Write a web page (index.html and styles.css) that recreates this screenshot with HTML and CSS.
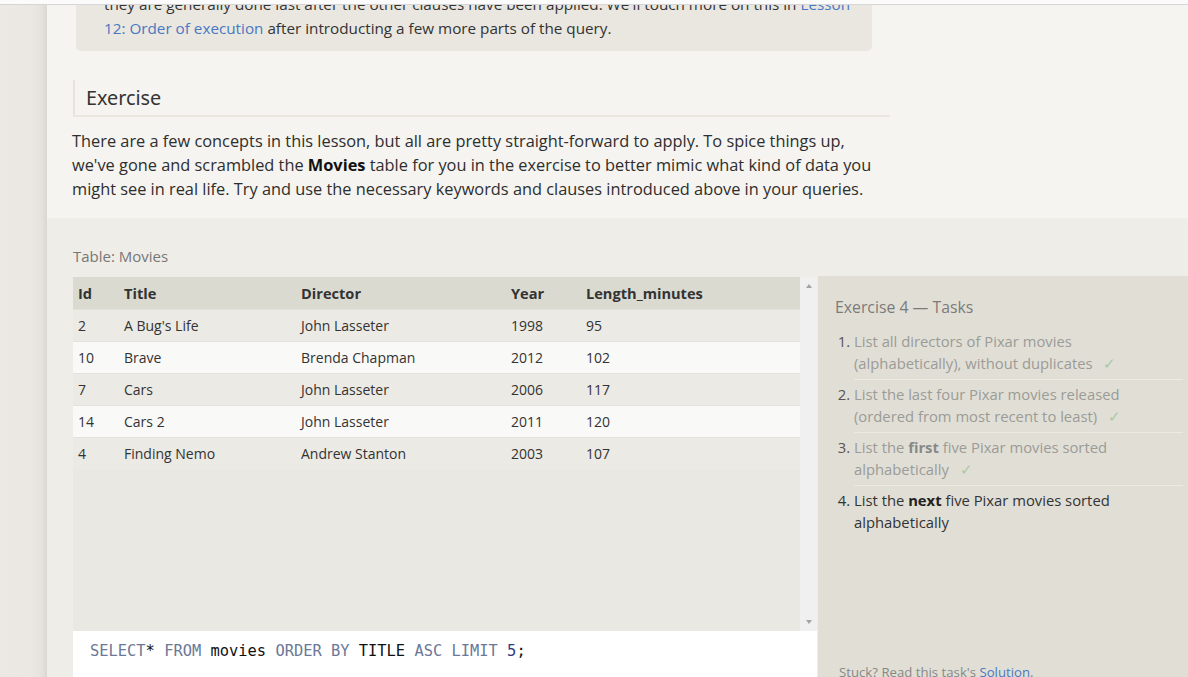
FILE: index.html
```html
<!DOCTYPE html>
<html lang="en">
<head>
<meta charset="utf-8">
<title>SQL Lesson – Exercise</title>
<link rel="stylesheet" href="styles.css">
</head>
<body>
<div class="topbar"></div>
<div class="page">
  <aside class="gutter"></aside>
  <main class="main">
    <section class="lesson">
      <div class="note">they are generally done last after the other clauses have been applied. We'll touch more on this in <a href="#">Lesson<br>12: Order of execution</a> after introducting a few more parts of the query.</div>
      <h2 class="ex-head">Exercise</h2>
      <p class="prose">There are a few concepts in this lesson, but all are pretty straight-forward to apply. To spice things up,<br>we've gone and scrambled the <strong>Movies</strong> table for you in the exercise to better mimic what kind of data you<br>might see in real life. Try and use the necessary keywords and clauses introduced above in your queries.</p>
    </section>
    <section class="exercise">
      <div class="table-label">Table: Movies</div>
      <div class="workspace">
        <div class="left">
          <div class="table-wrap">
            <div class="table-scroll">
              <table class="movies">
                <colgroup>
                  <col class="c-id"><col class="c-title"><col class="c-dir"><col class="c-year"><col class="c-len">
                </colgroup>
                <thead>
                  <tr><th>Id</th><th>Title</th><th>Director</th><th>Year</th><th>Length_minutes</th></tr>
                </thead>
                <tbody>
                  <tr><td>2</td><td>A Bug's Life</td><td>John Lasseter</td><td>1998</td><td>95</td></tr>
                  <tr><td>10</td><td>Brave</td><td>Brenda Chapman</td><td>2012</td><td>102</td></tr>
                  <tr><td>7</td><td>Cars</td><td>John Lasseter</td><td>2006</td><td>117</td></tr>
                  <tr><td>14</td><td>Cars 2</td><td>John Lasseter</td><td>2011</td><td>120</td></tr>
                  <tr><td>4</td><td>Finding Nemo</td><td>Andrew Stanton</td><td>2003</td><td>107</td></tr>
                </tbody>
              </table>
            </div>
            <div class="scrollbar">
              <span class="arrow up"></span>
              <span class="arrow down"></span>
            </div>
          </div>
          <div class="editor"><span class="kw">SELECT</span>* <span class="kw">FROM</span> movies <span class="kw">ORDER BY</span> TITLE <span class="kw">ASC</span> <span class="kw">LIMIT</span> <span class="num">5</span>;</div>
        </div>
        <div class="tasks">
          <h3 class="tasks-title">Exercise 4 — Tasks</h3>
          <ol class="task-list">
            <li class="done">List all directors of Pixar movies<br>(alphabetically), without duplicates <span class="check">✓</span></li>
            <li class="done">List the last four Pixar movies released<br>(ordered from most recent to least) <span class="check">✓</span></li>
            <li class="done">List the <strong>first</strong> five Pixar movies sorted<br>alphabetically <span class="check">✓</span></li>
            <li class="current">List the <strong>next</strong> five Pixar movies sorted<br>alphabetically</li>
          </ol>
          <p class="stuck">Stuck? Read this task's <a href="#">Solution</a>.</p>
        </div>
      </div>
    </section>
  </main>
</div>
</body>
</html>
```

FILE: styles.css
```css
* { box-sizing: border-box; }

html, body {
  margin: 0;
  padding: 0;
  height: 677px;
  overflow: hidden;
}

body {
  background: #ece9e5;
  font-family: "Open Sans", "Noto Sans", sans-serif;
  color: #333;
  position: relative;
}

a { color: #4a78c2; text-decoration: none; }

.topbar {
  position: absolute;
  left: 0;
  top: 0;
  width: 100%;
  height: 5px;
  background: #fbfbfb;
  border-bottom: 1px solid #d6d6d6;
  z-index: 5;
}

.page {
  display: flex;
  min-height: 100%;
}

.gutter {
  width: 47px;
  flex: none;
  background: linear-gradient(to right, #ece9e5 0, #ebe8e4 30px, #e4e0db 47px);
}

.main {
  flex: 1;
  background: #f5f4f0;
  box-shadow: -2px 0 6px rgba(0,0,0,0.06);
}

/* Lesson text */
.lesson {
  padding: 0 0 17px 25px;
}

.note {
  margin: -20px 0 0 4px;
  width: 796px;
  padding: 12px 10px 11px 28px;
  background: #e9e7e0;
  border-radius: 0 0 5px 5px;
  font-size: 15.25px;
  line-height: 24px;
  color: #333;
}

.ex-head {
  margin: 29px 0 0 1px;
  width: 817px;
  padding: 6px 0 6px 11px;
  border-left: 2px solid #e6e4dd;
  border-bottom: 2px solid #e8e6df;
  font-family: "Noto Sans", "Open Sans", sans-serif;
  font-weight: normal;
  font-size: 19.8px;
  line-height: 23px;
  color: #333;
}

.prose {
  margin: 12px 0 0 0;
  font-size: 16.35px;
  line-height: 24px;
  color: #2e2e2e;
  white-space: nowrap;
}

.prose strong { color: #111; }

/* Exercise area */
.exercise {
  background: #efede7;
  padding: 28px 0 0 26px;
}

.table-label {
  font-size: 15px;
  line-height: 20px;
  color: #777;
  margin-bottom: 10px;
}

.workspace {
  display: flex;
  gap: 1px;
}

.left {
  width: 744px;
  flex: none;
  padding-top: 1px;
}

.table-wrap {
  display: flex;
  height: 354px;
}

.table-scroll {
  flex: 1;
  background: #e9e8e2;
}

.movies {
  width: 100%;
  border-collapse: collapse;
  table-layout: fixed;
  font-size: 14px;
  color: #333;
}

.c-id { width: 46px; }
.c-title { width: 177px; }
.c-dir { width: 210px; }
.c-year { width: 75px; }

.movies th,
.movies td {
  height: 32px;
  padding: 0 5px;
  text-align: left;
  white-space: nowrap;
}

.movies th {
  background: #dbdad0;
  font-weight: bold;
  font-size: 14.6px;
  color: #333;
}

.movies tbody tr:nth-child(odd) { background: #ebeae4; }
.movies tbody tr:nth-child(even) { background: #f9f9f8; }
.movies tbody tr { border-top: 1px solid #e3e2dc; }

.scrollbar {
  width: 17px;
  flex: none;
  background: #f0f0f0;
  display: flex;
  flex-direction: column;
  justify-content: space-between;
  align-items: center;
  padding: 7px 0 7px;
}

.arrow {
  width: 0;
  height: 0;
  border-left: 3.5px solid transparent;
  border-right: 3.5px solid transparent;
}

.arrow.up { border-bottom: 4px solid #a3a3a3; }
.arrow.down { border-top: 4px solid #a3a3a3; }

.editor {
  background: #ffffff;
  height: 80px;
  padding: 11px 17px;
  font-family: "DejaVu Sans Mono", "Liberation Mono", monospace;
  font-size: 15.4px;
  line-height: 18px;
  color: #111;
  white-space: pre;
}

.editor .kw { color: #6b7896; }
.editor .num { color: #2e3a80; }

/* Tasks panel */
.tasks {
  flex: 1;
  background: #e1dfd5;
  display: flex;
  flex-direction: column;
  padding: 20px 5px 30px 17px;
}

.tasks-title {
  margin: 0;
  font-weight: normal;
  font-size: 15.8px;
  line-height: 22px;
  color: #7b7b7b;
}

.task-list {
  margin: 12px 0 0 0;
  padding: 0 0 0 19px;
  font-size: 14.8px;
  line-height: 22px;
}

.task-list li {
  padding: 3px 0 5px 0;
  border-bottom: 1px solid #eceae3;
}

.task-list li:first-child { padding-top: 0; }
.task-list li:last-child { border-bottom: none; }

.task-list li.done { color: #9b9b98; }
.task-list li.done::marker { color: #555; }
.task-list li.done strong { color: #888; }

.task-list li.current { color: #333; }
.task-list li.current strong { color: #222; }

.check {
  color: #a8c8a8;
  font-size: 15px;
  margin-left: 7px;
}

.stuck {
  margin: auto 0 0 4px;
  font-size: 13.2px;
  line-height: 18px;
  color: #888;
}
```
